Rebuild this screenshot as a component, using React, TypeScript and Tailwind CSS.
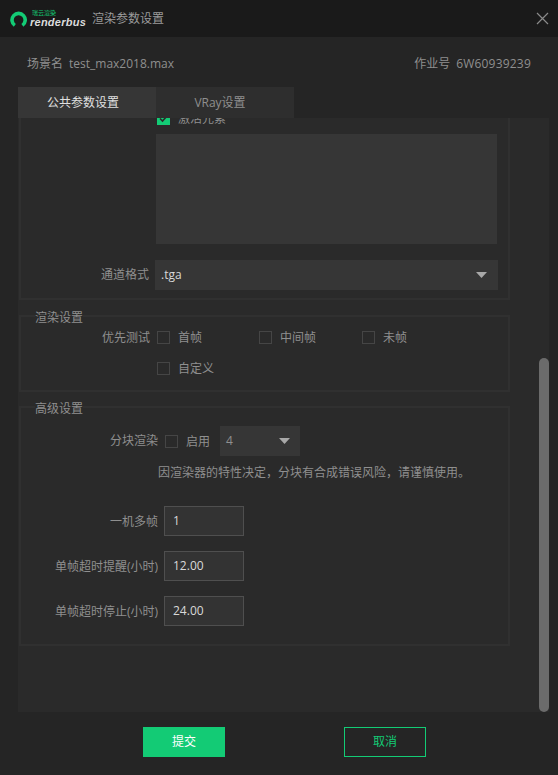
import React from "react";

const FONT = "font-['Open_Sans','Noto_Sans_CJK_SC',sans-serif]";

function Check({ label, checked, className = "" }: { label?: string; checked?: boolean; className?: string }) {
  return (
    <div className={`flex items-center ${className}`}>
      <span
        className={`w-[13px] h-[13px] flex items-center justify-center shrink-0 border ${
          checked ? "bg-[#13cb75] border-[#13cb75]" : "border-[#454545]"
        }`}
      >
        {checked && (
          <svg width="11" height="11" viewBox="0 0 11 11" fill="none">
            <path d="M2 5.5 L4.5 8 L9 3" stroke="#2a2a2a" strokeWidth="1.6" />
          </svg>
        )}
      </span>
      {label && <span className="ml-2 text-[12px] leading-[17px] text-[#8f8f8f]">{label}</span>}
    </div>
  );
}

function Arrow({ className = "" }: { className?: string }) {
  return (
    <svg width="11" height="6" viewBox="0 0 11 6" className={className}>
      <path d="M0 0 H11 L5.5 6 Z" fill="#a8a8a8" />
    </svg>
  );
}

function NumField({ label, value }: { label: string; value: string }) {
  return (
    <div className="flex items-center">
      <span className="w-[137px] text-right text-[12px] leading-[17px] text-[#8f8f8f]">{label}</span>
      <div className="ml-[6px] w-[80px] h-[30px] pl-2 flex items-center border border-[#4f4f4f] bg-[#333333] text-[12px] text-[#d9d9d9]">
        {value}
      </div>
    </div>
  );
}

function Group({ title, className = "", children }: { title?: string; className?: string; children: React.ReactNode }) {
  return (
    <fieldset className={`border-2 border-[#303030] ${className}`}>
      {title && <legend className="ml-[14px] pt-[3px] text-[12px] leading-[17px] text-[#8f8f8f]">{title}</legend>}
      {children}
    </fieldset>
  );
}

export default function App() {
  return (
    <div className={`w-[558px] h-[775px] bg-[#252525] flex flex-col overflow-hidden ${FONT}`}>
      <header className="h-[37px] shrink-0 bg-[#1a1a1a] flex items-center pl-[10px] pr-[9px]">
        <svg width="17" height="16" viewBox="0 0 17 16" fill="none">
          <path d="M4.8 14.4 A6.6 6.6 0 1 1 12.4 14.4" stroke="#13cb75" strokeWidth="3.6" />
        </svg>
        <div className="ml-[3px] flex flex-col">
          <span className="text-[6px] leading-[7px] text-[#13cb75] ml-[2px]">瑞云渲染</span>
          <span className="text-[11px] leading-[10px] font-bold italic tracking-[0.25px] text-[#dcdcdc] font-['Liberation_Sans']">renderbus</span>
        </div>
        <span className="ml-[6px] text-[12px] leading-[15px] -mt-[1px] text-[#9a9a9a]">渲染参数设置</span>
        <svg width="13" height="13" viewBox="0 0 13 13" className="ml-auto" fill="none">
          <path d="M1 1 L12 12 M12 1 L1 12" stroke="#8a8a8a" strokeWidth="1.2" />
        </svg>
      </header>

      <div className="h-[50px] pt-[4px] shrink-0 flex items-center justify-between pl-[27px] pr-[27px] text-[12px] text-[#8f8f8f]">
        <span>
          场景名<span className="ml-[6px]">test_max2018.max</span>
        </span>
        <span>
          作业号<span className="ml-[6px] tracking-[0.2px]">6W60939239</span>
        </span>
      </div>

      <div className="flex shrink-0 ml-[18px] h-[31px] text-[12px]">
        <div className="w-[138px] pr-[8px] bg-[#363636] text-[#e0e0e0] flex items-center justify-center">公共参数设置</div>
        <div className="w-[138px] pr-[10px] bg-[#2e2e2e] text-[#8f8f8f] flex items-center justify-center">VRay设置</div>
      </div>

      <div className="relative ml-[18px] mr-[9px] h-[594px] shrink-0 bg-[#2a2a2a] overflow-hidden">
        <div className="-mt-[24px] w-[491px] ml-[1px]">
          <Group className="h-[206px] border-t-0 pl-[135px] pt-[18px]">
            <Check checked label="激活元素" className="h-[13px] ml-[1px]" />
            <div className="mt-[9px] w-[341px] h-[110px] bg-[#363636]" />
            <div className="flex items-center mt-[16px] -ml-[135px]">
              <span className="w-[128px] text-right text-[12px] text-[#8f8f8f]">通道格式</span>
              <div className="ml-[6px] w-[343px] h-[30px] bg-[#363636] flex items-center justify-between pl-[6px] pr-[11px] text-[12px] text-[#d9d9d9]">
                .tga
                <Arrow />
              </div>
            </div>
          </Group>

          <Group title="渲染设置" className="mt-[6px] h-[86px]">
            <div className="flex items-center h-[17px] mt-[3px]">
              <span className="w-[129px] text-right text-[12px] text-[#8f8f8f]">优先测试</span>
              <Check label="首帧" className="ml-[7px] w-[102px]" />
              <Check label="中间帧" className="w-[103px]" />
              <Check label="未帧" />
            </div>
            <Check label="自定义" className="ml-[136px] mt-[14px]" />
          </Group>

          <Group title="高级设置" className="mt-[5px] h-[249px]">
            <div className="flex items-center h-[30px] mt-[9px]">
              <span className="w-[137px] text-right text-[12px] text-[#8f8f8f]">分块渲染</span>
              <Check label="启用" className="ml-[7px]" />
              <div className="ml-[10px] w-[80px] h-[30px] bg-[#363636] flex items-center justify-between pl-[6px] pr-[10px] text-[12px] text-[#8f8f8f]">
                4
                <Arrow />
              </div>
            </div>
            <p className="ml-[137px] mt-[8px] text-[12px] leading-[17px] text-[#8f8f8f]">
              因渲染器的特性决定，分块有合成错误风险，请谨慎使用。
            </p>
            <div className="mt-[25px] flex flex-col gap-[15px]">
              <NumField label="一机多帧" value="1" />
              <NumField label="单帧超时提醒(小时)" value="12.00" />
              <NumField label="单帧超时停止(小时)" value="24.00" />
            </div>
          </Group>
        </div>
        <div className="absolute right-0 bottom-0 w-[10px] h-[354px] bg-[#6b6b6b] rounded-[5px]" />
      </div>

      <div className="flex shrink-0 mt-[15px] ml-[143px] gap-[119px] text-[12px]">
        <button className="w-[82px] h-[30px] bg-[#13cb75] text-white">提交</button>
        <button className="w-[82px] h-[30px] border border-[#13cb75] text-[#13cb75]">取消</button>
      </div>
    </div>
  );
}
